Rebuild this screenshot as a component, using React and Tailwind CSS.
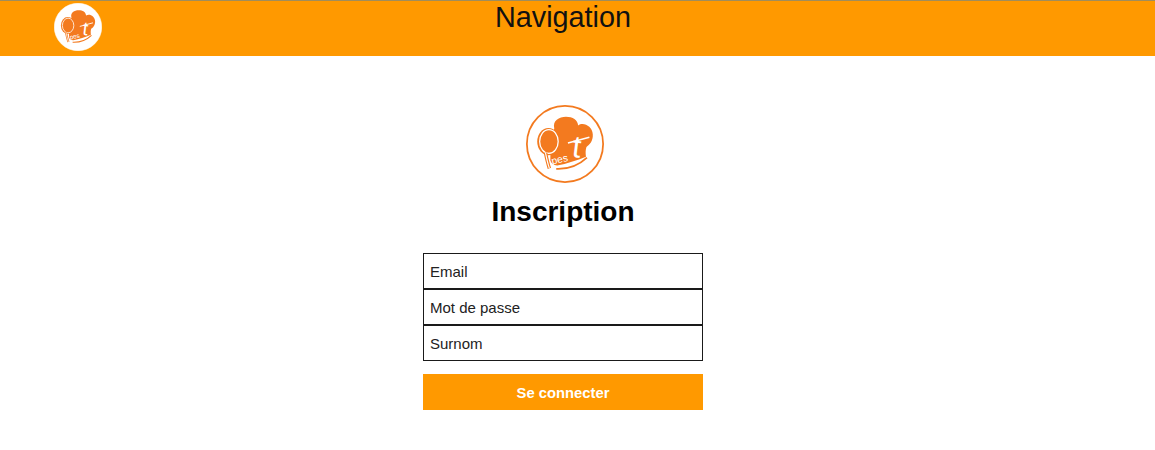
function Logo({ size, ring, ringWidth }) {
  const fill = "#f37a1f";
  return (
    <svg width={size} height={size} viewBox="0 0 80 80" className="block shrink-0">
      <circle cx="40" cy="40" r={40 - ringWidth / 2} fill="#ffffff" stroke={ring} strokeWidth={ringWidth} />
      <path
        d="M29 24 C27 16 34 12 41 12 C48 12 53 15 53.5 21 C59 17 68 22 68.5 30 C69 37 65 41 62 43 C61 46 61 49 61.5 53 C52 57 42 60 32 62 C28 62 26 60 25 57 L25 40 Z"
        fill={fill}
      />
      <ellipse cx="23" cy="37.5" rx="11.5" ry="14" fill={fill} />
      <ellipse cx="23.5" cy="37.5" rx="9.5" ry="12.2" fill={fill} stroke="#ffffff" strokeWidth="1.3" />
      <path d="M20 49 C21 54 22 59 24 65" stroke={fill} strokeWidth="3.6" fill="none" />
      <path d="M20 49 C21 54 22 59 24 65" stroke="#ffffff" strokeWidth="1.2" fill="none" />
      <path d="M31 65.5 C42 66 54 62 62.5 54" stroke={fill} strokeWidth="1.8" fill="none" />
      <text x="46.5" y="53" fontFamily="'Liberation Sans', sans-serif" fontSize="32" fill="#ffffff" transform="rotate(7 46.5 53)">t</text>
      <path d="M43 39 L65 33" stroke="#ffffff" strokeWidth="1.5" fill="none" />
      <text x="27" y="61" fontFamily="'Liberation Sans', sans-serif" fontSize="10.5" fill="#ffffff" transform="rotate(-12 27 61)">pes</text>
    </svg>
  );
}

function Field({ label }) {
  return (
    <div className="h-9 w-[280px] border border-[#1a1a1a] bg-white flex items-center pl-[6px] pt-[2px] text-[15px] text-[#222]">
      {label}
    </div>
  );
}

export default function App() {
  return (
    <div className="min-h-[450px] bg-white font-['Liberation_Sans',Arial,sans-serif] text-black">
      <header className="h-14 bg-[#ff9900] border-t border-[#a08d5c]">
        <div className="w-[1126px] grid grid-cols-[1fr_auto_1fr]">
          <div className="pl-[54px] pt-[2px]">
            <Logo size={48} ring="#ffffff" ringWidth={1} />
          </div>
          <h1 className="text-[28.8px] leading-[33px] text-[#111]">Navigation</h1>
          <div />
        </div>
      </header>
      <main className="w-[1126px] flex flex-col items-center pt-[49px]">
        <div className="ml-1">
          <Logo size={78} ring="#f37a1f" ringWidth={1.8} />
        </div>
        <h2 className="mt-3 text-[28px] leading-[34px] font-bold">Inscription</h2>
        <div className="mt-6 flex flex-col">
          <Field label="Email" />
          <Field label="Mot de passe" />
          <Field label="Surnom" />
        </div>
        <button className="mt-[13px] h-9 w-[280px] bg-[#ff9900] pt-[2px] text-white text-[14.8px] font-bold">
          Se connecter
        </button>
      </main>
    </div>
  );
}
